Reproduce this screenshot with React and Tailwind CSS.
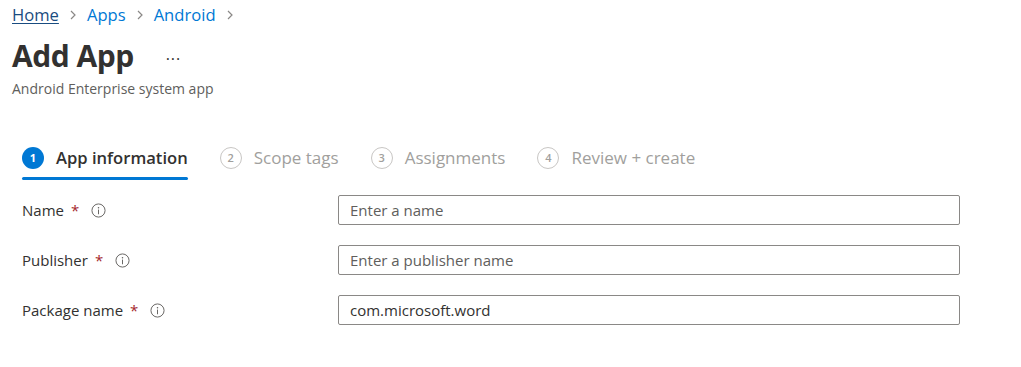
import React from 'react';

const font = { fontFamily: '"Open Sans", "Noto Sans", sans-serif' };

const InfoIcon = () => (
  <svg width="15" height="15" viewBox="0 0 16 16" className="text-[#605e5c]">
    <circle cx="8" cy="8" r="7" fill="none" stroke="currentColor" strokeWidth="1" />
    <circle cx="8" cy="5" r="0.8" fill="currentColor" />
    <path d="M8 7v5" stroke="currentColor" strokeWidth="1" />
  </svg>
);

const Chevron = () => (
  <svg width="10" height="12" viewBox="0 0 10 12" className="mx-[9px] text-[#8a8886]">
    <path d="M3 2l4 4-4 4" fill="none" stroke="currentColor" strokeWidth="1.2" />
  </svg>
);

const steps = [
  { n: 1, label: 'App information', active: true },
  { n: 2, label: 'Scope tags' },
  { n: 3, label: 'Assignments' },
  { n: 4, label: 'Review + create' },
];

const fields = [
  { label: 'Name', placeholder: 'Enter a name', value: '' },
  { label: 'Publisher', placeholder: 'Enter a publisher name', value: '' },
  { label: 'Package name', placeholder: '', value: 'com.microsoft.word' },
];

export default function App() {
  return (
    <div className="w-[1021px] h-[367px] bg-white text-[#323130]" style={font}>
      {/* Breadcrumb */}
      <div className="flex items-center pl-[12px] pt-[4px] h-[26px] text-[16.6px]">
        <span className="text-[#1a4c80] underline underline-offset-2">Home</span>
        <Chevron />
        <span className="text-[#0078d4]">Apps</span>
        <Chevron />
        <span className="text-[#0078d4]">Android</span>
        <Chevron />
      </div>

      {/* Title */}
      <div className="flex items-center pl-[12px] mt-[10px] h-[40px]">
        <h1 className="text-[30px] font-bold tracking-[-0.5px] leading-none">Add App</h1>
        <span className="ml-[32px] text-[16px] text-[#323130] tracking-[1px] -mt-[5px]">...</span>
      </div>
      <div className="pl-[12px] mt-[2px] text-[14px] text-[#605e5c]">Android Enterprise system app</div>

      {/* Steps */}
      <div className="flex items-start pl-[22px] mt-[45px]">
        {steps.map((s) => (
          <div key={s.n} className="mr-[32px] flex flex-col">
            <div className="flex items-center h-[28px]">
              {s.active ? (
                <span className="w-[22px] h-[22px] rounded-full bg-[#0078d4] text-white text-[11px] font-bold flex items-center justify-center">
                  {s.n}
                </span>
              ) : (
                <span className="w-[22px] h-[22px] rounded-full border-[1.5px] border-[#c8c6c4] text-[#a19f9d] text-[11px] font-semibold flex items-center justify-center">
                  {s.n}
                </span>
              )}
              <span className={`ml-[12px] ${s.active ? 'text-[16.6px] font-semibold text-[#323130]' : 'text-[17px] text-[#a19f9d]'}`}>
                {s.label}
              </span>
            </div>
            <div className={`mt-[5px] h-[3px] rounded-sm ${s.active ? 'bg-[#0078d4]' : 'bg-transparent'}`} />
          </div>
        ))}
      </div>

      {/* Form */}
      <div className="pl-[22px] mt-[15px] flex flex-col gap-[20px]">
        {fields.map((f) => (
          <div key={f.label} className="flex items-center h-[30px]">
            <div className="w-[316px] flex items-center text-[15px]">
              <span>{f.label}</span>
              <span className="ml-[7px] text-[#a4262c]">*</span>
              <span className="ml-[12px] flex items-center"><InfoIcon /></span>
            </div>
            <input
              className="w-[622px] h-[30px] border border-[#8a8886] rounded-[2px] px-[11px] text-[15px] text-[#323130] placeholder:text-[#605e5c] outline-none"
              placeholder={f.placeholder}
              defaultValue={f.value}
              style={font}
            />
          </div>
        ))}
      </div>
    </div>
  );
}
